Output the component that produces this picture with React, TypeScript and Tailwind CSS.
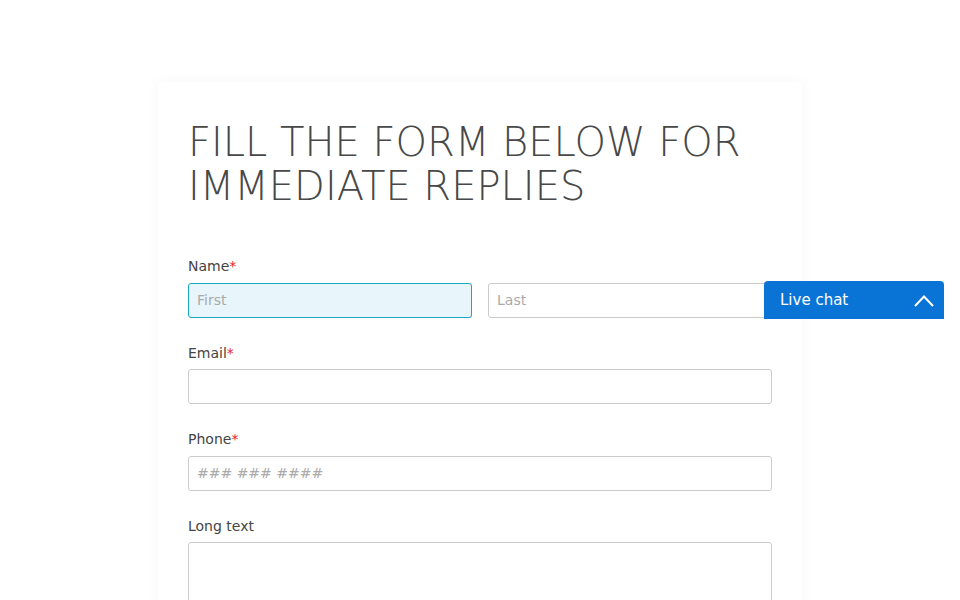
export default function App() {
  return (
    <div className="relative h-[600px] overflow-hidden bg-white font-['DejaVu_Sans',sans-serif]">
      <div className="pt-[82px]">
        <div className="mx-auto w-[644px] bg-white px-[30px] pt-[38px] pb-10 shadow-[0_0_12px_rgba(0,0,0,0.04)]">
          <h1 className="text-[40px] leading-[44px] font-extralight text-[#484848]">
            FILL THE FORM BELOW FOR IMMEDIATE REPLIES
          </h1>

          <form className="mt-[48px]">
            <Field label="Name" required>
              <div className="flex gap-4">
                <input
                  autoFocus
                  placeholder="First"
                  className="h-[35px] w-full rounded-[3px] border border-[#1ba6c6] bg-[#e8f5fb] px-2 text-sm text-[#444] placeholder:text-[#aaa] outline-none"
                />
                <input placeholder="Last" className={INPUT} />
              </div>
            </Field>
            <Field label="Email" required>
              <input className={INPUT} />
            </Field>
            <Field label="Phone" required>
              <input placeholder="### ### ####" className={INPUT} />
            </Field>
            <Field label="Long text">
              <textarea className="h-[120px] w-full resize-none rounded-[3px] border border-[#ccc] px-2 py-2 text-sm outline-none" />
            </Field>
          </form>
        </div>
      </div>

      <button className="absolute right-4 top-[281px] flex h-[38px] w-[180px] items-center justify-between rounded-t-[4px] bg-[#0a74d6] pl-4 pr-[10px] text-[15px] text-white">
        <span>Live chat</span>
        <svg width="20" height="13" viewBox="0 0 20 13" fill="none" stroke="white" strokeWidth="2">
          <path d="M1 12 L10 2.5 L19 12" />
        </svg>
      </button>
    </div>
  );
}

const INPUT =
  "h-[35px] w-full rounded-[3px] border border-[#ccc] bg-white px-2 text-sm text-[#444] placeholder:text-[#aaa] outline-none";

function Field({ label, required = false, children }: { label: string; required?: boolean; children: React.ReactNode }) {
  return (
    <div className="mb-[25px]">
      <label className="mb-[6.5px] block text-sm leading-5 text-[#444]">
        {label}
        {required && <span className="text-[#e4242c]">*</span>}
      </label>
      {children}
    </div>
  );
}
